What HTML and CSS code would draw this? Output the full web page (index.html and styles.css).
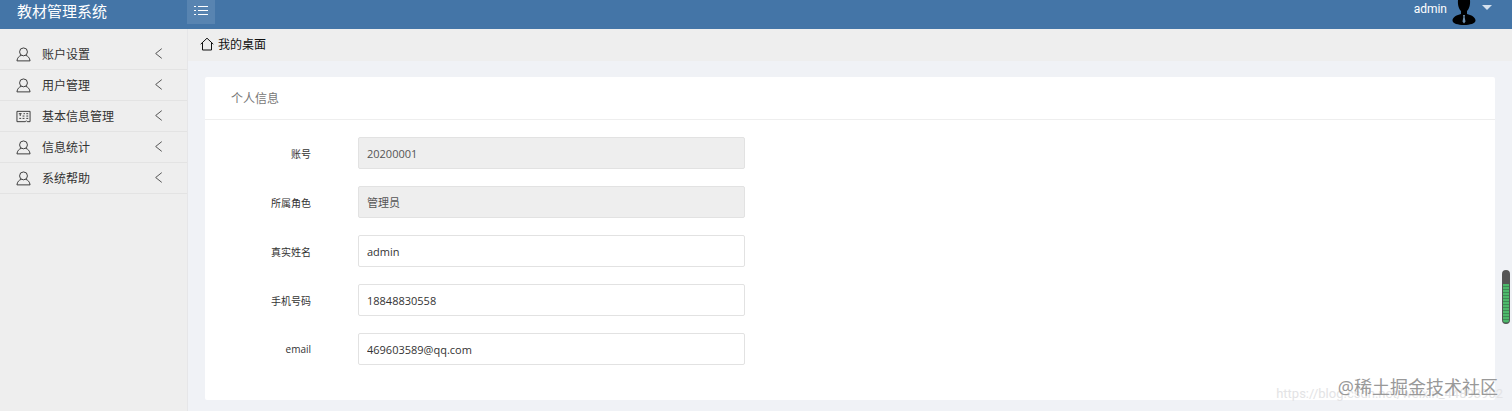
FILE: index.html
```
<!DOCTYPE html>
<html lang="zh-CN">
<head>
  <meta charset="UTF-8">
  <title>教材管理系统</title>
  <link rel="stylesheet" href="styles.css">
</head>
<body>
  <svg class="symbols" aria-hidden="true">
    <symbol id="icon-user" viewBox="0 0 16 16">
      <circle cx="8" cy="5.200" r="4.200"/>
      <path d="M5.800 8.800C3.200 9.600 1.400 11.500 1 14.800H15C14.600 11.500 12.800 9.600 10.200 8.800"/>
    </symbol>
    <symbol id="icon-left" viewBox="0 0 16 16">
      <path d="M12 2L4.500 8L12 14"/>
    </symbol>
  </svg>

  <header class="header">
    <div class="logo">教材管理系统</div>
    <button class="toggle-btn" type="button" aria-label="菜单">
      <svg viewBox="0 0 14 12"><path d="M0 1.500H2M4 1.500H14M0 5.500H2M4 5.500H14M0 9.500H2M4 9.500H14"/></svg>
    </button>
    <a class="account" href="#">
      <span>admin</span>
      <svg class="avatar" viewBox="0 0 24 25">
        <path d="M6 0H18C18.500 5 17 9 15 11V14C19 15 23.500 17 23.500 20.500C23.500 23.500 18 25 12 25C6 25 .5 23.500 .5 20.500C.5 17 5 15 9 14V11C7 9 5.500 5 6 0Z"/>
        <path class="tie" d="M11 15H13L12.600 17L13.500 21.500L12 23.500L10.500 21.500L11.400 17Z"/>
      </svg>
      <svg class="caret" viewBox="0 0 10 5"><path d="M0 0H10L5 5Z"/></svg>
    </a>
  </header>

  <div class="main">
    <nav class="sidebar">
      <a class="menu-item" href="#">
        <svg class="icon"><use href="#icon-user"/></svg>
        <span>账户设置</span>
        <svg class="arrow"><use href="#icon-left"/></svg>
      </a>
      <a class="menu-item" href="#">
        <svg class="icon"><use href="#icon-user"/></svg>
        <span>用户管理</span>
        <svg class="arrow"><use href="#icon-left"/></svg>
      </a>
      <a class="menu-item" href="#">
        <svg class="icon" viewBox="0 0 16 16">
          <path d="M1 2.500H15V13.500H12L11 12.500L10 13.500H1ZM3 5H6M4.500 5V7.500M8 5H9.500M11 5H13M7 7.500H9M11 7.500H13M3.500 10H5.500M7 10H9M11 10H13"/>
        </svg>
        <span>基本信息管理</span>
        <svg class="arrow"><use href="#icon-left"/></svg>
      </a>
      <a class="menu-item" href="#">
        <svg class="icon"><use href="#icon-user"/></svg>
        <span>信息统计</span>
        <svg class="arrow"><use href="#icon-left"/></svg>
      </a>
      <a class="menu-item" href="#">
        <svg class="icon"><use href="#icon-user"/></svg>
        <span>系统帮助</span>
        <svg class="arrow"><use href="#icon-left"/></svg>
      </a>
    </nav>

    <div class="content">
      <div class="tab-bar">
        <svg class="home" viewBox="0 0 14 14"><path d="M.7 7.200L7 1.200L13.300 7.200M2.500 6V13H11.500V6"/></svg>
        <a href="#">我的桌面</a>
      </div>

      <section class="card">
        <h2 class="card-header">个人信息</h2>
        <form class="card-body">
          <div class="form-row">
            <label for="account">账号</label>
            <input type="text" id="account" value="20200001" readonly>
          </div>
          <div class="form-row">
            <label for="role">所属角色</label>
            <input type="text" id="role" value="管理员" readonly>
          </div>
          <div class="form-row">
            <label for="realName">真实姓名</label>
            <input type="text" id="realName" value="admin">
          </div>
          <div class="form-row">
            <label for="phone">手机号码</label>
            <input type="text" id="phone" value="18848830558">
          </div>
          <div class="form-row">
            <label for="email">email</label>
            <input type="text" id="email" value="469603589@qq.com">
          </div>
        </form>
      </section>
    </div>
  </div>

  <div class="meter"></div>
  <div class="watermark-url">https://blog.csdn.net/weixin_44893902</div>
  <div class="watermark">@稀土掘金技术社区</div>
</body>
</html>
```
FILE: styles.css
```
* {
  box-sizing: border-box;
}

body {
  position: relative;
  display: flex;
  flex-direction: column;
  min-height: 100vh;
  margin: 0;
  font-family: "Open Sans", "Noto Sans CJK SC", sans-serif;
  font-size: 12px;
  color: #333;
  background: #f0f2f6;
}

a {
  color: inherit;
  text-decoration: none;
}

svg {
  flex: none;
  fill: none;
  stroke: currentColor;
}

.symbols {
  position: absolute;
  width: 0;
  height: 0;
}

/* 顶部栏 */
.header {
  display: flex;
  align-items: flex-start;
  height: 29px;
  color: #fff;
  background: #4475a7;
}

.logo {
  width: 187px;
  padding-left: 17px;
  font-size: 15px;
  line-height: 22px;
}

.toggle-btn {
  display: flex;
  align-items: center;
  justify-content: center;
  width: 28px;
  height: 24px;
  padding: 0 0 2px;
  border: none;
  color: #fff;
  background: #5884b1;
  cursor: pointer;
}

.toggle-btn svg {
  width: 14px;
  height: 12px;
}

.account {
  display: flex;
  align-items: flex-start;
  margin-left: auto;
  padding-right: 20px;
  font-family: Roboto, sans-serif;
  line-height: 18px;
}

.avatar {
  width: 24px;
  height: 25px;
  margin: 0 6px 0 5px;
  fill: #000;
  stroke: none;
}

.avatar .tie {
  fill: #6d8fae;
}

.caret {
  width: 10px;
  height: 5px;
  margin-top: 5px;
  fill: #d5e1ee;
  stroke: none;
}

.main {
  display: flex;
  flex: 1;
}

/* 左侧菜单 */
.sidebar {
  width: 188px;
  padding-top: 10px;
  border-right: 1px solid #e6e6e8;
  background: #eee;
}

.menu-item {
  display: flex;
  align-items: center;
  height: 31px;
  padding: 0 20px 0 16px;
  border-bottom: 1px solid #e3e3e3;
}

.icon {
  width: 15px;
  height: 15px;
  margin-right: 11px;
}

.arrow {
  width: 13px;
  height: 13px;
  margin: 0 2px 2px auto;
}

.content {
  flex: 1;
}

.tab-bar {
  display: flex;
  align-items: center;
  gap: 4px;
  height: 32px;
  padding: 0 12px 2px;
  color: #111;
  background: #eee;
}

.home {
  width: 14px;
  height: 14px;
}

/* 个人信息卡片 */
.card {
  margin: 16px 17px 11px;
  border-radius: 2px;
  background: #fff;
}

.card-header {
  height: 43px;
  margin: 0;
  padding-left: 26px;
  border-bottom: 1px solid #eee;
  font-size: 12px;
  font-weight: normal;
  line-height: 43px;
  color: #777;
}

.card-body {
  display: grid;
  gap: 17px;
  padding: 17px 0 35px;
}

.form-row {
  display: flex;
  align-items: center;
}

.form-row label {
  width: 153px;
  padding-right: 47px;
  font-size: 10px;
  text-align: right;
}

.form-row input {
  width: 30%;
  height: 32px;
  padding: 0 8px;
  border: 1px solid #e2e2e2;
  border-radius: 2px;
  font-family: inherit;
  font-size: 11px;
  color: #333;
  background: #fff;
}

.form-row input[readonly] {
  color: #555;
  background: #eee;
}

/* 浮动元素 */
.meter {
  position: absolute;
  top: 270px;
  right: 2px;
  width: 8px;
  height: 54px;
  border: 1px solid #555;
  border-top-width: 14px;
  border-radius: 4px;
  background: repeating-linear-gradient(#4db86b 0 2px, #3d8b55 2px 3px);
}

.watermark,
.watermark-url {
  position: absolute;
  white-space: nowrap;
  pointer-events: none;
}

.watermark {
  right: 14px;
  bottom: 12px;
  font-size: 18px;
  line-height: 24px;
  color: #999;
}

.watermark-url {
  right: 9px;
  bottom: 8px;
  font-family: Roboto, sans-serif;
  font-size: 13px;
  line-height: 18px;
  color: #e3e3e5;
}
```
